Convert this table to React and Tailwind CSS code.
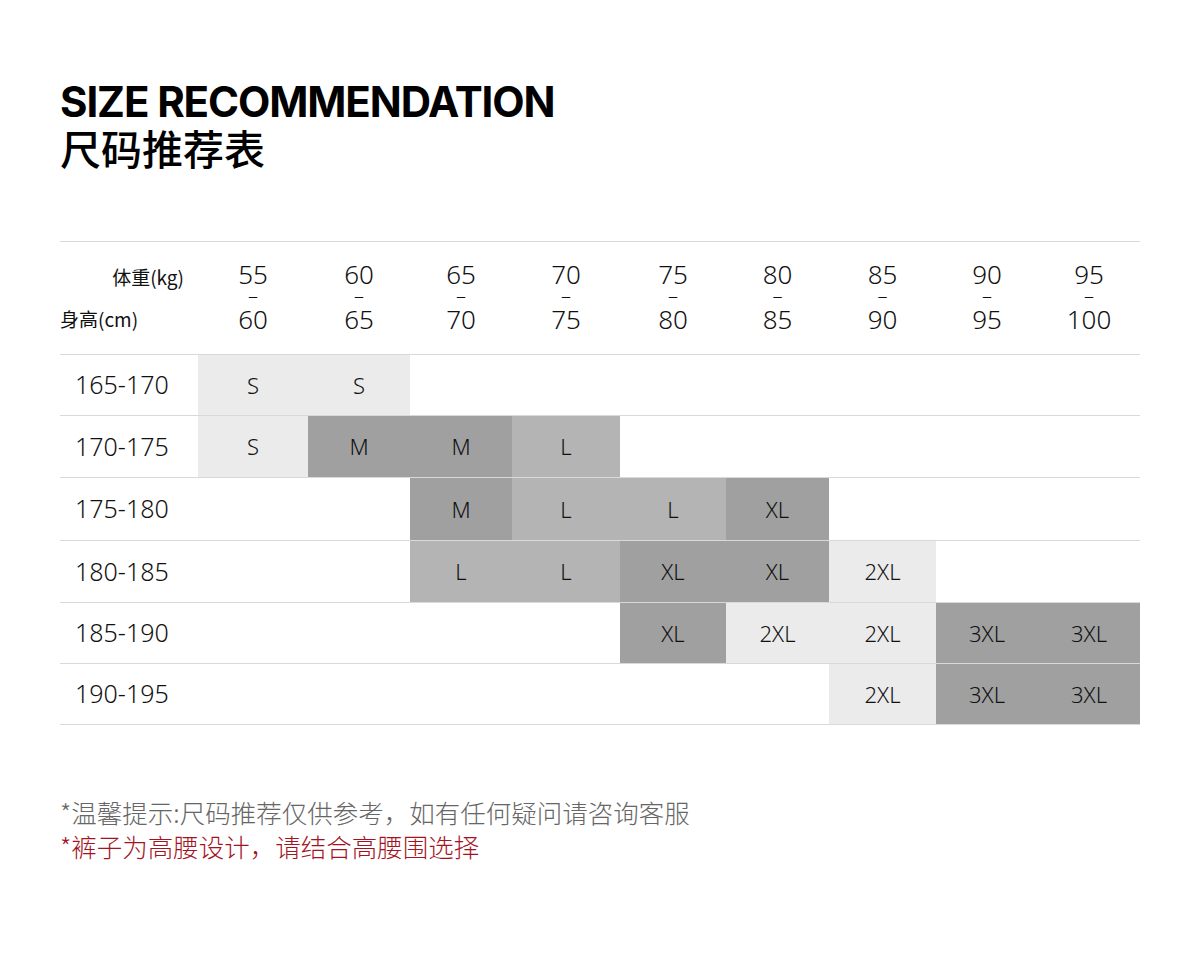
import React from 'react';

const cols = [
  ['55', '60'], ['60', '65'], ['65', '70'], ['70', '75'], ['75', '80'],
  ['80', '85'], ['85', '90'], ['90', '95'], ['95', '100'],
];

// d = dark, m = medium, l = light, null = empty
const rows = [
  { h: '165-170', ht: 'h-[61px]', cells: [['S', 'l'], ['S', 'l'], null, null, null, null, null, null, null] },
  { h: '170-175', ht: 'h-[62px]', cells: [['S', 'l'], ['M', 'd'], ['M', 'd'], ['L', 'm'], null, null, null, null, null] },
  { h: '175-180', ht: 'h-[63px]', cells: [null, null, ['M', 'd'], ['L', 'm'], ['L', 'm'], ['XL', 'd'], null, null, null] },
  { h: '180-185', ht: 'h-[62px]', cells: [null, null, ['L', 'm'], ['L', 'm'], ['XL', 'd'], ['XL', 'd'], ['2XL', 'l'], null, null] },
  { h: '185-190', ht: 'h-[61px]', cells: [null, null, null, null, ['XL', 'd'], ['2XL', 'l'], ['2XL', 'l'], ['3XL', 'd'], ['3XL', 'd']] },
  { h: '190-195', ht: 'h-[61px]', cells: [null, null, null, null, null, null, ['2XL', 'l'], ['3XL', 'd'], ['3XL', 'd']] },
];

const bg = { d: 'bg-[#a0a0a0]', m: 'bg-[#b4b4b4]', l: 'bg-[#ebebeb]' };

const grid = 'grid grid-cols-[138px_110px_102px_102px_108px_106px_103px_107px_102px_102px]';
const font = { fontFamily: '"Noto Sans", "Noto Sans CJK SC", sans-serif' };
const cjk = { fontFamily: '"Noto Sans CJK SC", sans-serif' };

export default function App() {
  return (
    <div className="bg-white w-[1200px] h-[972px] text-black" style={font}>
      <div className="pl-[60px] pt-[80px]">
        <h1 className="text-[42px] leading-[44px] font-bold tracking-[-1.1px]" style={{ fontFamily: 'Inter, "Noto Sans CJK SC", sans-serif' }}>
          SIZE RECOMMENDATION
        </h1>
        <h2 className="text-[41px] leading-[46px] font-medium" style={cjk}>
          尺码推荐表
        </h2>
      </div>

      <div className="ml-[60px] mt-[71px] w-[1080px]">
        {/* header row */}
        <div className={`${grid} h-[114px] border-t border-b border-[#d9d9d9] items-center`}>
          <div className="flex flex-col text-[19px] leading-[24px] text-[#111]" style={cjk}>
            <span className="self-end pr-[14px]">体重(kg)</span>
            <span className="mt-[18px]">身高(cm)</span>
          </div>
          {cols.map(([a, b]) => (
            <div key={a} className="flex flex-col items-center text-[26px] font-light leading-[24px] text-[#111] pb-[4px]">
              <span>{a}</span>
              <span className="h-[21px] flex items-center text-[20px] leading-none">–</span>
              <span>{b}</span>
            </div>
          ))}
        </div>

        {rows.map((r) => (
          <div key={r.h} className={`${grid} ${r.ht} border-b border-[#d9d9d9]`}>
            <div className="flex items-center pl-[15px] text-[25px] font-light text-[#111]">{r.h}</div>
            {r.cells.map((c, i) => (
              <div
                key={i}
                className={`flex items-center justify-center text-[22px] font-light text-[#111] ${c ? bg[c[1]] : ''}`}
              >
                {c ? c[0] : ''}
              </div>
            ))}
          </div>
        ))}
      </div>

      <div className="pl-[60px] mt-[70px] text-[25.5px] leading-[34px]" style={cjk}>
        <p className="text-[#666] font-light">*温馨提示:尺码推荐仅供参考，如有任何疑问请咨询客服</p>
        <p className="text-[#a4141f] font-light">*裤子为高腰设计，请结合高腰围选择</p>
      </div>
    </div>
  );
}
